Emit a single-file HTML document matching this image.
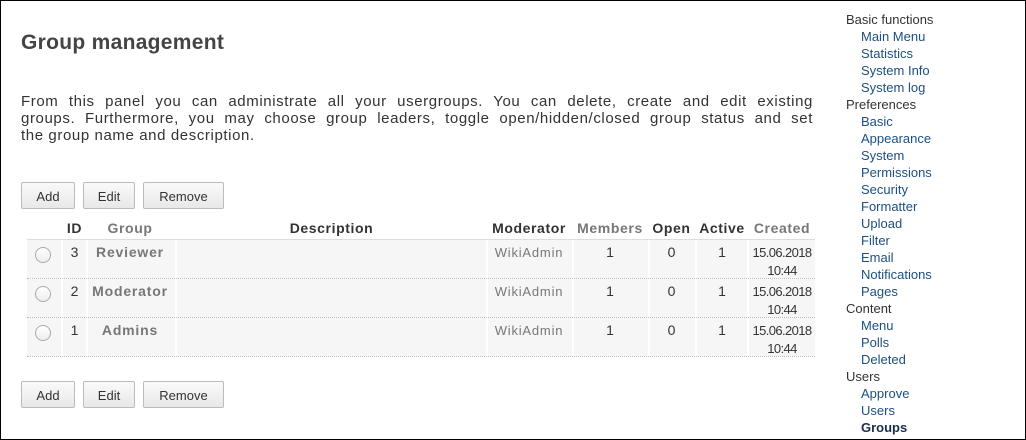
<!DOCTYPE html><html><head><style>
body{margin:0;width:1026px;height:440px;overflow:hidden;background:#fff;font-family:"Liberation Sans",sans-serif;position:relative}
.frame{position:absolute;left:0;top:0;width:1024px;height:438px;border:1px solid #000}
h1{position:absolute;left:21px;top:31px;margin:0;font-size:21px;color:#444;font-weight:bold;letter-spacing:.3px}
p{position:absolute;left:21px;top:93px;width:792px;margin:0;font-size:15px;line-height:17px;color:#333;letter-spacing:.6px}
p span{display:block;white-space:nowrap}
p span.j{text-align:justify;text-align-last:justify;white-space:normal}
.btn{position:absolute;height:27px;border:1px solid #bbb;border-radius:2px;background:linear-gradient(#fafafa,#e8e8e8);font-size:13px;color:#333;text-align:center;line-height:27px;box-sizing:border-box}
.c{position:absolute;font-size:14px;text-align:center}
.h{top:220px;font-weight:bold;color:#333;letter-spacing:.6px}
.g{color:#777}
.row{position:absolute;left:27px;width:788px;height:38px;border-bottom:1px dotted #bbb}
.cell{position:absolute;top:0;height:38px;background:#f6f6f6}
.side{position:absolute;left:846px;top:11px;font-size:13px;line-height:17px;color:#333}
.side a{display:block;padding-left:15px;color:#1d4f80;text-decoration:none}
.radio{position:absolute;width:14px;height:14px;border:1px solid #aaa;border-radius:50%;background:linear-gradient(#fff,#eee)}
</style></head><body><div class="frame"></div>
<h1>Group management</h1>
<p><span class="j">From this panel you can administrate all your usergroups. You can delete, create and edit existing</span><span class="j">groups. Furthermore, you may choose group leaders, toggle open/hidden/closed group status and set</span><span>the group name and description.</span></p>
<div class="btn" style="left:21px;top:182px;width:54px">Add</div>
<div class="btn" style="left:83px;top:182px;width:52px">Edit</div>
<div class="btn" style="left:143px;top:182px;width:81px">Remove</div>
<div class="btn" style="left:21px;top:381px;width:54px">Add</div>
<div class="btn" style="left:83px;top:381px;width:52px">Edit</div>
<div class="btn" style="left:143px;top:381px;width:81px">Remove</div>
<div class="c h" style="left:63px;width:23px">ID</div>
<div class="c h g" style="left:86px;width:88px">Group</div>
<div class="c h" style="left:176px;width:311px">Description</div>
<div class="c h" style="left:487px;width:84px">Moderator</div>
<div class="c h g" style="left:572px;width:76px">Members</div>
<div class="c h" style="left:648px;width:47px">Open</div>
<div class="c h" style="left:695px;width:54px">Active</div>
<div class="c h g" style="left:749px;width:66px">Created</div>
<div style="position:absolute;left:27px;top:239px;width:788px;border-top:1px solid #ddd"></div>
<div id="rows"></div>
<script>
var d=[["3","Reviewer"],["2","Moderator"],["1","Admins"]],t=240,h="";
d.forEach(function(r,i){var y=t+i*39;
h+='<div class="row" style="top:'+y+'px">';
[[0,34],[36,23],[61,87],[150,309],[461,84],[547,74],[623,45],[670,50],[722,66]].forEach(function(c){h+='<div class="cell" style="left:'+c[0]+'px;width:'+c[1]+'px"></div>'});
h+='</div><div class="radio" style="left:35px;top:'+(y+7)+'px"></div>';
h+='<div class="c" style="left:63px;width:23px;top:'+(y+4)+'px;color:#333">'+r[0]+'</div>';
h+='<div class="c g" style="left:86px;width:88px;top:'+(y+4)+'px;font-weight:bold;letter-spacing:.8px">'+r[1]+'</div>';
h+='<div class="c g" style="left:487px;width:84px;top:'+(y+5)+'px;font-size:13px;letter-spacing:.8px">WikiAdmin</div>';
h+='<div class="c" style="left:572px;width:76px;top:'+(y+4)+'px;color:#333">1</div>';
h+='<div class="c" style="left:648px;width:47px;top:'+(y+4)+'px;color:#333">0</div>';
h+='<div class="c" style="left:695px;width:54px;top:'+(y+4)+'px;color:#333">1</div>';
h+='<div class="c" style="left:749px;width:66px;top:'+(y+4)+'px;font-size:13px;line-height:18px;color:#333;letter-spacing:-.6px">15.06.2018<br>10:44</div>';});
document.getElementById('rows').innerHTML=h;
</script>
<div class="side">Basic functions<a>Main Menu</a><a>Statistics</a><a>System Info</a><a>System log</a>Preferences<a>Basic</a><a>Appearance</a><a>System</a><a>Permissions</a><a>Security</a><a>Formatter</a><a>Upload</a><a>Filter</a><a>Email</a><a>Notifications</a><a>Pages</a>Content<a>Menu</a><a>Polls</a><a>Deleted</a>Users<a>Approve</a><a>Users</a><a style="font-weight:bold;color:#1a2e4a">Groups</a></div>
</body></html>
